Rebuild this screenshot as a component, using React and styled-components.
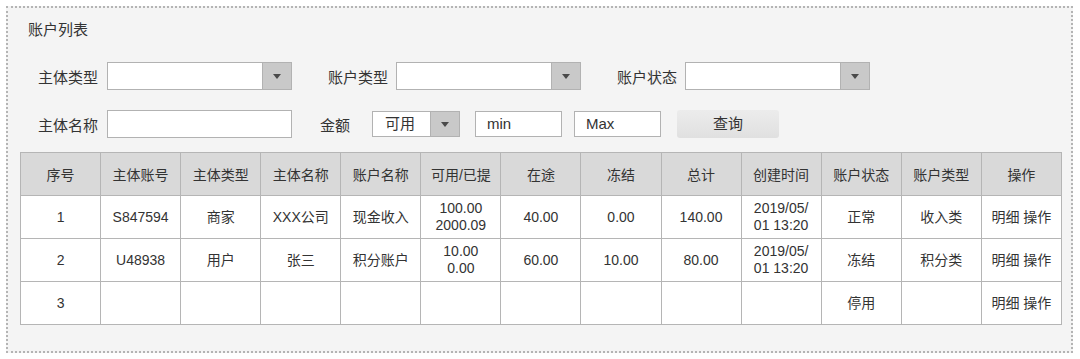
import styled, { createGlobalStyle } from "styled-components"

const GlobalStyle = createGlobalStyle`
  body {
    margin: 0;
    background: #ffffff;
    font-family: "Liberation Sans", "Noto Sans CJK SC", sans-serif;
    color: #333333;
  }
`

const Page = styled.div`
  padding: 6px;
`

const Panel = styled.div`
  box-sizing: border-box;
  width: 1067px;
  height: 347px;
  border: 2px dotted #b4b4b4;
  background: #f4f4f4;
`

const Title = styled.div`
  margin: 12px 0 0 20px;
  font-size: 15px;
  line-height: 20px;
`

const FormRow = styled.div`
  display: flex;
  align-items: center;
  padding-left: 30px;
  margin-top: ${(p) => p.$top}px;
  height: 28px;
`

const Label = styled.span`
  font-size: 15px;
  margin-left: ${(p) => p.$left || 0}px;
  margin-right: ${(p) => p.$gap || 8}px;
  white-space: nowrap;
`

const SelectBox = styled.div`
  box-sizing: border-box;
  display: flex;
  width: ${(p) => p.$width}px;
  height: ${(p) => p.$height || 28}px;
  margin-left: ${(p) => p.$left || 0}px;
  border: 1px solid #b2b2b2;
  background: #ffffff;
`

const SelectValue = styled.div`
  flex: 1;
  padding-left: 12px;
  font-size: 15px;
  line-height: 24px;
`

const ArrowBtn = styled.div`
  width: 28px;
  display: flex;
  align-items: center;
  justify-content: center;
  background: #c9c9c9;
  border-left: 1px solid #b2b2b2;
  &::after {
    content: "";
    border-left: 4px solid transparent;
    border-right: 4px solid transparent;
    border-top: 5px solid #4a4a4a;
  }
`

const TextInput = styled.div`
  box-sizing: border-box;
  width: ${(p) => p.$width}px;
  height: ${(p) => p.$height || 28}px;
  margin-left: ${(p) => p.$left || 0}px;
  border: 1px solid #b2b2b2;
  background: #ffffff;
  padding-left: 11px;
  font-size: 15px;
  line-height: 24px;
`

const QueryButton = styled.div`
  box-sizing: border-box;
  width: 102px;
  height: 28px;
  margin-left: 16px;
  border-radius: 3px;
  background: linear-gradient(#ececec, #e0e0e0);
  text-align: center;
  font-size: 15px;
  line-height: 28px;
`

const Table = styled.table`
  margin: 14px 0 0 12px;
  width: 1042px;
  table-layout: fixed;
  border-collapse: collapse;
  background: #ffffff;
  font-size: 14px;
`

const Th = styled.th`
  height: 42px;
  padding: 0;
  font-weight: normal;
  background: #d9d9d9;
  border: 1px solid #b5b5b5;
  color: #333333;
`

const Td = styled.td`
  height: 42px;
  padding: 0;
  text-align: center;
  border: 1px solid #b5b5b5;
  line-height: 17px;
`

const headers = [
  "序号", "主体账号", "主体类型", "主体名称", "账户名称", "可用/已提", "在途",
  "冻结", "总计", "创建时间", "账户状态", "账户类型", "操作",
]

const rows = [
  ["1", "S847594", "商家", "XXX公司", "现金收入", ["100.00", "2000.09"], "40.00", "0.00", "140.00", ["2019/05/", "01 13:20"], "正常", "收入类", "明细 操作"],
  ["2", "U48938", "用户", "张三", "积分账户", ["10.00", "0.00"], "60.00", "10.00", "80.00", ["2019/05/", "01 13:20"], "冻结", "积分类", "明细 操作"],
  ["3", "", "", "", "", "", "", "", "", "", "停用", "", "明细 操作"],
]

function Select({ width, height, left, value }) {
  return (
    <SelectBox $width={width} $height={height} $left={left}>
      <SelectValue>{value}</SelectValue>
      <ArrowBtn />
    </SelectBox>
  )
}

export default function App() {
  return (
    <Page>
      <GlobalStyle />
      <Panel>
        <Title>账户列表</Title>
        <FormRow $top={22}>
          <Label $gap={9}>主体类型</Label>
          <Select width={185} />
          <Label $left={36}>账户类型</Label>
          <Select width={185} />
          <Label $left={36}>账户状态</Label>
          <Select width={185} />
        </FormRow>
        <FormRow $top={20}>
          <Label $gap={9}>主体名称</Label>
          <TextInput $width={185} />
          <Label $left={28} $gap={22}>金额</Label>
          <Select width={88} height={26} value="可用" />
          <TextInput $width={87} $height={26} $left={15}>min</TextInput>
          <TextInput $width={87} $height={26} $left={12}>Max</TextInput>
          <QueryButton>查询</QueryButton>
        </FormRow>
        <Table>
          <thead>
            <tr>
              {headers.map((h) => (
                <Th key={h}>{h}</Th>
              ))}
            </tr>
          </thead>
          <tbody>
            {rows.map((r, i) => (
              <tr key={i}>
                {r.map((c, j) => (
                  <Td key={j}>
                    {Array.isArray(c) ? (
                      <>
                        {c[0]}
                        <br />
                        {c[1]}
                      </>
                    ) : (
                      c
                    )}
                  </Td>
                ))}
              </tr>
            ))}
          </tbody>
        </Table>
      </Panel>
    </Page>
  )
}
